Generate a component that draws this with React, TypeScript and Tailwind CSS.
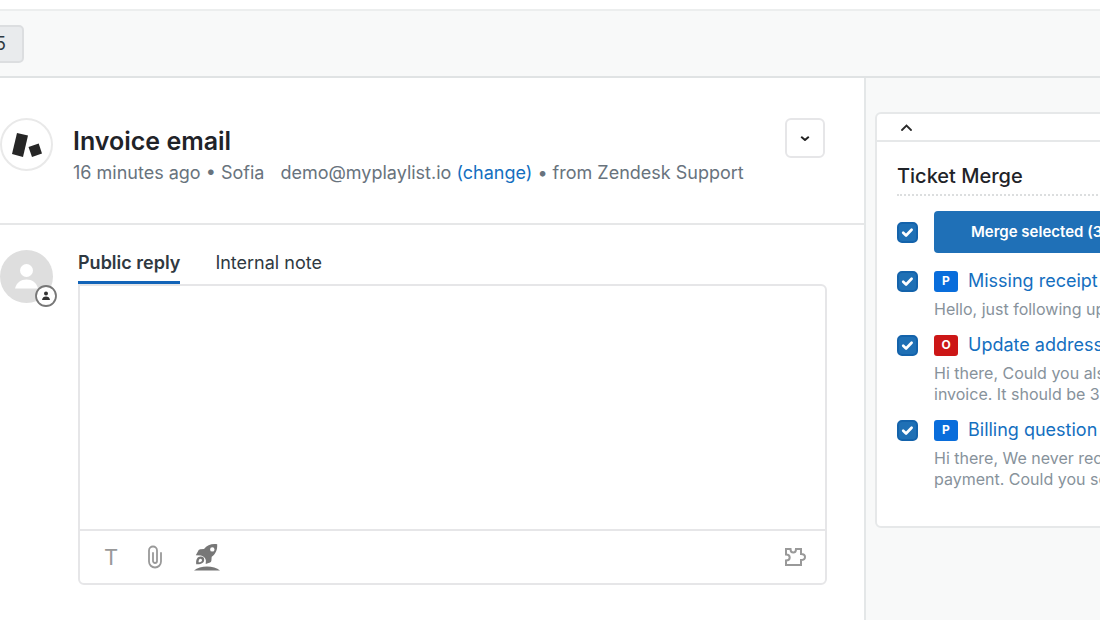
import React, { useState } from 'react';

interface Ticket {
  id: string;
  status: 'P' | 'O';
  title: string;
  preview: string[];
}

const tickets: Ticket[] = [
  { id: 'missing', status: 'P', title: 'Missing receipt', preview: ['Hello, just following up'] },
  { id: 'address', status: 'O', title: 'Update address', preview: ['Hi there, Could you also', 'invoice. It should be 3'] },
  { id: 'billing', status: 'P', title: 'Billing question', preview: ['Hi there, We never received', 'payment. Could you send'] },
];

interface CheckBoxProps {
  label: string;
  checked: boolean;
  onChange: () => void;
}

const CheckBox: React.FC<CheckBoxProps> = ({ label, checked, onChange }) => (
  <span className="relative flex h-[21px] w-[21px] shrink-0">
    <input
      type="checkbox"
      aria-label={label}
      checked={checked}
      onChange={onChange}
      className="h-full w-full appearance-none rounded-[5px] border-2 border-[#1463ab] bg-white checked:bg-[#1f70b5]"
    />
    {checked && (
      <svg className="pointer-events-none absolute inset-0" width="21" height="21" viewBox="0 0 22 22" fill="none" stroke="#fff" strokeWidth="2.8" strokeLinecap="round" strokeLinejoin="round">
        <path d="M6.5 11.2l3 2.9 5.8-6" />
      </svg>
    )}
  </span>
);

const TicketHeader: React.FC = () => (
  <div className="flex items-start gap-5 border-b-2 border-[#e6e7e8] pt-10 pr-[39px] pb-9">
    {/* Brand avatar */}
    <div className="flex h-[53px] w-[53px] shrink-0 items-center justify-center rounded-full border-2 border-[#e9e9e9]">
      <svg width="32" height="26" viewBox="0 0 32 26" fill="#262626">
        <path d="M6 1l11 2.5-5 21.500-11-3z" />
        <path d="M17.500 15l10.200-3.500 3.300 10-10 3.500z" />
      </svg>
    </div>
    <div className="min-w-0 flex-1 pt-[5px]">
      <h1 className="text-[25px] leading-9 font-semibold text-[#1f2328]">Invoice email</h1>
      <p className="text-lg leading-7 whitespace-nowrap text-[#68737d]">
        16 minutes ago • Sofia
        <span className="ml-4">demo@myplaylist.io</span>{' '}
        <a href="#change" className="text-[#146fbf]">(change)</a> • from Zendesk Support
      </p>
    </div>
    <button aria-label="More options" className="flex h-10 w-10 shrink-0 items-center justify-center rounded-md border-2 border-[#e6e6e8]">
      <svg className="mt-0.5" width="10" height="6" viewBox="0 0 10 6" fill="none" stroke="#222" strokeWidth="2" strokeLinecap="round" strokeLinejoin="round">
        <path d="M1.800 1.300L5 4L8.200 1.300" />
      </svg>
    </button>
  </div>
);

const AgentAvatar: React.FC = () => (
  <div className="relative h-[53px] w-[53px] shrink-0">
    <svg width="53" height="53" viewBox="0 0 53 53">
      <circle cx="26.500" cy="26.500" r="26.500" fill="#dedede" />
      <circle cx="26.500" cy="20.500" r="6.500" fill="#fff" />
      <path d="M15 38.500c1.500-6 6-9 11.500-9s10 3 11.500 9z" fill="#fff" />
    </svg>
    <svg className="absolute -right-1 -bottom-1" width="22" height="22" viewBox="0 0 22 22">
      <circle cx="11" cy="11" r="10" fill="#fff" stroke="#777" strokeWidth="1.800" />
      <circle cx="11" cy="8.500" r="2" fill="#333" />
      <path d="M7 15c.3-2.300 1.900-3.400 4-3.400s3.700 1.100 4 3.400z" fill="#333" />
    </svg>
  </div>
);

const Composer: React.FC = () => {
  const [tab, setTab] = useState<'public' | 'internal'>('public');
  const [text, setText] = useState('');

  return (
    <div className="flex items-start gap-[25px] pt-[25px] pr-[37px] pb-8">
      <AgentAvatar />
      <div className="min-w-0 flex-1">
        <div className="flex gap-[35px] text-lg leading-[26px] text-[#2f3941]">
          <button
            onClick={() => setTab('public')}
            className={tab === 'public' ? 'border-b-[3px] border-[#1264b8] pb-[5px] font-semibold' : 'border-b-[3px] border-transparent pb-[5px]'}
          >
            Public reply
          </button>
          <button
            onClick={() => setTab('internal')}
            className={tab === 'internal' ? 'border-b-[3px] border-[#1264b8] pb-[5px] font-semibold' : 'border-b-[3px] border-transparent pb-[5px]'}
          >
            Internal note
          </button>
        </div>

        <div className="rounded-md rounded-tl-none border-2 border-[#e6e6e8]">
          <textarea
            aria-label="Reply"
            value={text}
            onChange={(e) => setText(e.target.value)}
            className="block h-[243px] w-full resize-none p-4 text-lg outline-none"
          />
          {/* Toolbar */}
          <div className="flex h-[54px] items-center border-t-2 border-[#e6e6e8] pr-[18px] pl-6 text-[#999]">
            <button aria-label="Text formatting" className="text-[22px] leading-7">T</button>
            <button aria-label="Attach file" className="ml-7">
              <svg width="18" height="24" viewBox="0 0 18 24" fill="none" stroke="currentColor" strokeWidth="1.800" strokeLinecap="round">
                <path d="M15 8v8.500a6 6 0 0 1-12 0V5.500a4 4 0 0 1 8 0V16a2 2 0 0 1-4 0V8" />
              </svg>
            </button>
            <button aria-label="Apply macro" className="ml-7 text-[#777]">
              <svg width="30" height="30" viewBox="0 0 30 30" fill="currentColor">
                <path d="M2 28.500C8 23.300 22 23.300 28 28.500z" />
                <path fillRule="evenodd" d="M25.200 2.200c-6-.6-10 .8-13.200 4.800l-3.700.3c-1 .1-1.600.6-2 1.400l-2.500 4.600 5.200.2c2.500.6 4.500 2.600 4.900 5l-.2 3.600 4.400-1.600c.8-.5 1.200-1.100 1.300-2l.3-3.700c4-3 5.800-6.800 5.500-12.600zM20.300 9.600a2.200 2.200 0 1 1 0-4.400 2.200 2.200 0 0 1 0 4.400z" />
                <path fillRule="evenodd" d="M8.800 14.600c-3.300 0-5 2.700-4.600 7.600 4.800.4 8-1.200 8-4.400a3.300 3.300 0 0 0-3.400-3.200zM8.600 16.700a1.600 1.600 0 0 1 1.400 1.700c-.2 1.200-1.400 1.800-3.400 1.800 0-2.200.5-3.500 2-3.500z" />
              </svg>
            </button>
            <button aria-label="Apps" className="ml-auto">
              <svg width="24" height="20" viewBox="0 0 24 20" fill="none" stroke="currentColor" strokeWidth="2" strokeLinejoin="miter">
                <path d="M3 2h4.500c0 2 1 3.500 2.800 3.500S13 4 13 2h5v5c2.500 0 4 1.200 4 3s-1.500 3-4 3v5H3v-4.500c2.500 0 3.700-1.200 3.700-3S5.500 7.500 3 7.500z" />
              </svg>
            </button>
          </div>
        </div>
      </div>
    </div>
  );
};

const MergePanel: React.FC = () => {
  const [selected, setSelected] = useState<string[]>(tickets.map((t) => t.id));

  const toggle = (id: string) => {
    setSelected((prev) => (prev.includes(id) ? prev.filter((s) => s !== id) : [...prev, id]));
  };

  const toggleAll = () => {
    setSelected(selected.length === tickets.length ? [] : tickets.map((t) => t.id));
  };

  return (
    <section className="w-[360px] rounded-md border-2 border-[#e6e8e9] bg-white">
      <button aria-label="Collapse panel" className="flex h-7 w-full items-center border-b-2 border-[#e6e8e9] pl-6">
        <svg width="11" height="7" viewBox="0 0 11 7" fill="none" stroke="#2a2a2a" strokeWidth="1.800" strokeLinecap="round">
          <path d="M1 6l4.500-4.500L10 6" />
        </svg>
      </button>

      <div className="px-5 pt-5 pb-9">
        <h2 className="border-b-2 border-dotted border-[#dcdedf] pb-1 text-xl leading-7 font-medium text-[#1f2328]">Ticket Merge</h2>

        <div className="mt-[15px] flex items-center gap-4">
          <CheckBox label="Select all tickets" checked={selected.length === tickets.length} onChange={toggleAll} />
          <button className="h-[42px] flex-1 rounded-sm bg-[#1f70b7] pl-[37px] text-left text-[15px] font-semibold whitespace-nowrap text-white">
            Merge selected ({selected.length})
          </button>
        </div>

        <ul className="mt-4 flex flex-col gap-[13px]">
          {tickets.map((ticket) => (
            <li key={ticket.id} className="flex gap-4">
              <div className="flex h-6 items-center">
                <CheckBox label={ticket.title} checked={selected.includes(ticket.id)} onChange={() => toggle(ticket.id)} />
              </div>
              <div className="min-w-0 flex-1">
                <div className="flex h-6 items-center gap-2.5">
                  <span className={`flex h-[21px] w-6 items-center justify-center rounded-[3px] text-xs font-bold text-white ${ticket.status === 'P' ? 'bg-[#096ddb]' : 'bg-[#cc1616]'}`}>
                    {ticket.status}
                  </span>
                  <a href={`#${ticket.id}`} className="text-lg leading-6 whitespace-nowrap text-[#146fbf]">{ticket.title}</a>
                </div>
                <p className="mt-1.5 text-base leading-[21px] whitespace-nowrap text-[#87929b]">
                  {ticket.preview.map((line) => (
                    <span key={line} className="block">{line}</span>
                  ))}
                </p>
              </div>
            </li>
          ))}
        </ul>
      </div>
    </section>
  );
};

export default function App() {
  return (
    <div className="flex min-h-screen flex-col overflow-hidden bg-white font-['Inter',sans-serif]">
      {/* Tab strip */}
      <header className="mt-[9px] flex h-[69px] shrink-0 items-center border-t-2 border-b-2 border-t-[#eceeee] border-b-[#e0e3e4] bg-[#f8f9f9]">
        <button className="-ml-10 flex h-[38px] w-16 items-center justify-end rounded-[5px] border-2 border-[#dcdee0] bg-[#e9ebed] pr-4 text-lg text-[#2f3941]">5</button>
      </header>

      <div className="flex flex-1">
        <main className="min-w-0 flex-1 border-r-2 border-[#e4e7e8]">
          <TicketHeader />
          <Composer />
        </main>
        <aside className="w-[234px] shrink-0 overflow-hidden bg-[#f8f9f9] pt-[34px] pl-[9px]">
          <MergePanel />
        </aside>
      </div>
    </div>
  );
}
